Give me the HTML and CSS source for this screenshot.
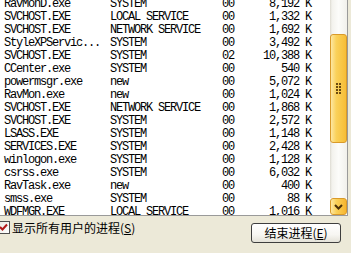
FILE: index.html
```html
<!DOCTYPE html>
<html>
<head>
<meta charset="utf-8">
<link rel="stylesheet" href="styles.css">
</head>
<body>
<div class="window">
  <div class="listbox">
    <div class="rows">
      <div class="rows-inner">
        <div class="row"><span>RavMonD.exe</span><span>SYSTEM</span><span>00</span><span class="mem">8,192 K</span></div>
        <div class="row"><span>SVCHOST.EXE</span><span>LOCAL SERVICE</span><span>00</span><span class="mem">1,332 K</span></div>
        <div class="row"><span>SVCHOST.EXE</span><span>NETWORK SERVICE</span><span>00</span><span class="mem">1,692 K</span></div>
        <div class="row"><span>StyleXPServic...</span><span>SYSTEM</span><span>00</span><span class="mem">3,492 K</span></div>
        <div class="row"><span>SVCHOST.EXE</span><span>SYSTEM</span><span>02</span><span class="mem">10,388 K</span></div>
        <div class="row"><span>CCenter.exe</span><span>SYSTEM</span><span>00</span><span class="mem">540 K</span></div>
        <div class="row"><span>powermsgr.exe</span><span>new</span><span>00</span><span class="mem">5,072 K</span></div>
        <div class="row"><span>RavMon.exe</span><span>new</span><span>00</span><span class="mem">1,024 K</span></div>
        <div class="row"><span>SVCHOST.EXE</span><span>NETWORK SERVICE</span><span>00</span><span class="mem">1,868 K</span></div>
        <div class="row"><span>SVCHOST.EXE</span><span>SYSTEM</span><span>00</span><span class="mem">2,572 K</span></div>
        <div class="row"><span>LSASS.EXE</span><span>SYSTEM</span><span>00</span><span class="mem">1,148 K</span></div>
        <div class="row"><span>SERVICES.EXE</span><span>SYSTEM</span><span>00</span><span class="mem">2,428 K</span></div>
        <div class="row"><span>winlogon.exe</span><span>SYSTEM</span><span>00</span><span class="mem">1,128 K</span></div>
        <div class="row"><span>csrss.exe</span><span>SYSTEM</span><span>00</span><span class="mem">6,032 K</span></div>
        <div class="row"><span>RavTask.exe</span><span>new</span><span>00</span><span class="mem">400 K</span></div>
        <div class="row"><span>smss.exe</span><span>SYSTEM</span><span>00</span><span class="mem">88 K</span></div>
        <div class="row"><span>WDFMGR.EXE</span><span>LOCAL SERVICE</span><span>00</span><span class="mem">1,016 K</span></div>
      </div>
    </div>
    <div class="vscroll">
      <div class="track">
        <div class="thumb">
          <svg class="grip" width="6" height="11" viewBox="0 0 6 11">
            <rect x="0" y="0" width="2" height="2" fill="#6b4a10"/><rect x="3" y="0" width="2" height="2" fill="#6b4a10"/>
            <rect x="0" y="3" width="2" height="2" fill="#6b4a10"/><rect x="3" y="3" width="2" height="2" fill="#6b4a10"/>
            <rect x="0" y="6" width="2" height="2" fill="#6b4a10"/><rect x="3" y="6" width="2" height="2" fill="#6b4a10"/>
            <rect x="0" y="9" width="2" height="2" fill="#6b4a10"/><rect x="3" y="9" width="2" height="2" fill="#6b4a10"/>
          </svg>
        </div>
      </div>
      <div class="btn-down">
        <svg width="9" height="6" viewBox="0 0 9 6"><path d="M1 1 L4.5 4.5 L8 1" fill="none" stroke="#4a2f08" stroke-width="2"/></svg>
      </div>
    </div>
  </div>
  <div class="footer">
    <label class="check">
      <span class="box"><svg width="9" height="9" viewBox="0 0 9 9"><path d="M1 4 L3.5 6.5 L8 1.5" fill="none" stroke="#b01818" stroke-width="2"/></svg></span>
      <span class="label">显示所有用户的进程(<u>S</u>)</span>
    </label>
    <button class="end">结束进程(<u>E</u>)</button>
  </div>
</div>
</body>
</html>
```
FILE: styles.css
```css
html, body {
  margin: 0;
  padding: 0;
}
body {
  width: 351px;
  height: 253px;
  overflow: hidden;
  background: #ece9d8;
}
.window {
  width: 351px;
  height: 253px;
  display: flex;
  flex-direction: column;
  background: #ece9d8;
}
.listbox {
  display: flex;
  width: 347px;
  height: 215px;
  flex: none;
  background: #fff;
  border-right: 1px solid #9a9a9a;
  border-bottom: 1px solid #9a9a9a;
}
.rows {
  width: 330px;
  overflow: hidden;
  font-family: "Liberation Mono", monospace;
  font-size: 12px;
  letter-spacing: -1.2px;
  color: #000;
}
.rows-inner {
  margin-top: -2px;
}
.row {
  display: grid;
  grid-template-columns: 106px 112px 30px 59px;
  height: 13px;
  line-height: 13px;
  padding-left: 4px;
  white-space: nowrap;
}
.mem {
  text-align: right;
}
.vscroll {
  width: 17px;
  display: flex;
  flex-direction: column;
}
.track {
  flex: 1;
  padding-top: 34px;
  background: linear-gradient(to right, #dddbd2 0, #f3f2ed 2px, #fcfcfa 50%, #f1f0eb 100%);
}
.thumb {
  height: 107px;
  border: 1px solid #d99a2a;
  border-radius: 3px;
  background: linear-gradient(to right, #fde7a2 0%, #fad15a 35%, #f7bd36 100%);
  display: flex;
  align-items: center;
  justify-content: center;
}
.btn-down {
  height: 15px;
  border: 1px solid #d99a2a;
  border-radius: 3px;
  background: linear-gradient(to right, #fde7a2 0%, #fad15a 35%, #f6b52e 100%);
  display: flex;
  align-items: center;
  justify-content: center;
}
.footer {
  flex: 1;
  display: flex;
  justify-content: space-between;
  align-items: flex-start;
  padding-right: 10px;
}
.check {
  display: flex;
  align-items: center;
  gap: 2px;
  margin-top: 5px;
  margin-left: -3px;
  font-family: "Noto Sans CJK SC", sans-serif;
  font-size: 12px;
  line-height: 13px;
  color: #000;
}
.box {
  width: 11px;
  height: 11px;
  border: 1px solid #4e4e4e;
  background: linear-gradient(135deg, #e8e7e0, #ffffff);
  display: flex;
  align-items: center;
  justify-content: center;
}
.end {
  margin: 7px 0 0 0;
  width: 90px;
  height: 20px;
  padding: 0;
  border: 1px solid #3e3e3e;
  border-radius: 3px;
  background: linear-gradient(to bottom, #ffffff 0%, #f7f6f2 60%, #e4e2d8 100%);
  font-family: "Noto Sans CJK SC", sans-serif;
  font-size: 12px;
  line-height: 16px;
  color: #000;
}
```
